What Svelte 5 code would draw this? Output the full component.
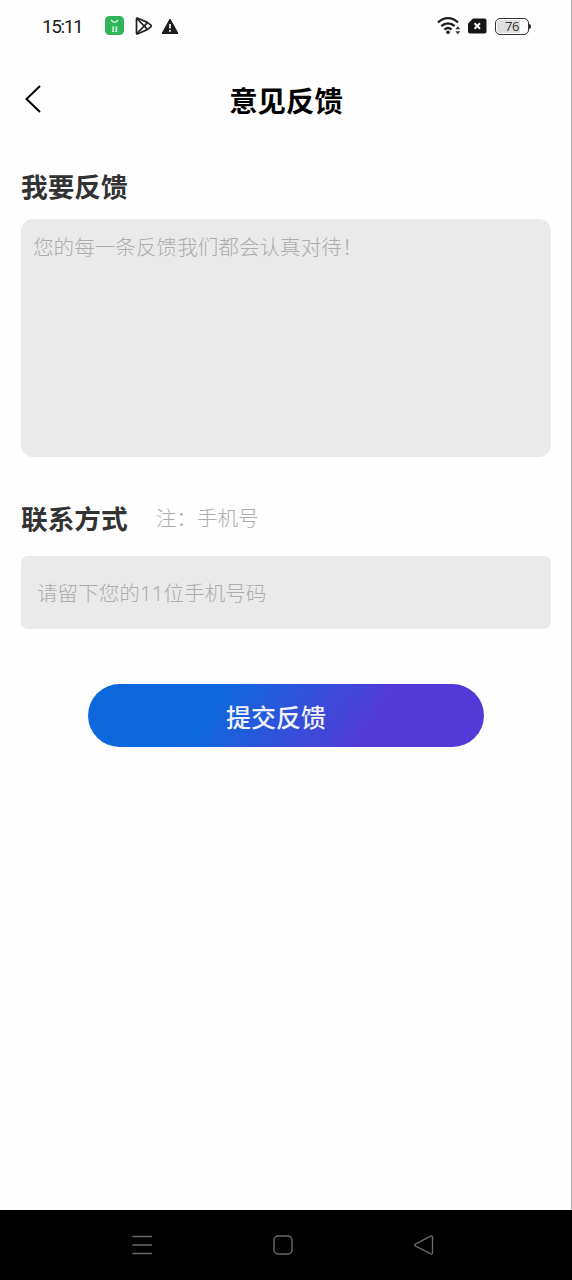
<script>
	let content = $state('');
	let phone = $state('');

	function submit(event) {
		event.preventDefault();
		content = '';
		phone = '';
	}
</script>

<div class="screen">
	<div class="status">
		<span class="time">15:11</span>
		<svg class="app" width="20" height="20" viewBox="0 0 20 20">
			<rect x="0" y="0" width="19" height="19" rx="4.5" fill="#2fb457" />
			<path d="M6.2 3.7c.8 3.4 6 3.4 6.8 0" fill="none" stroke="#e9ffef" stroke-width="1.1" />
			<path
				d="M7 11h2.200M10.200 11h2.300M8.200 11v5M11.300 11v5M7 13.300h2.200M10.200 13.300h2.300M7 15.500h2.200M10.200 15.500h2.300"
				fill="none"
				stroke="#d5f7de"
				stroke-width="1.1"
			/>
		</svg>
		<svg class="play" width="18" height="18" viewBox="0 0 18 18">
			<path d="M2.8 1.2Q1.500.5 1.500 2v14q0 1.500 1.300.8L12.200 12.600 15.800 9.800q1-.8 0-1.600L12.200 5.400z" />
			<path d="M1.800 1.500 12.300 12.200M1.800 16.500 12.300 5.800" />
		</svg>
		<svg class="warn" width="18" height="17" viewBox="0 0 18 17">
			<path d="M9 1 17 15.500H1z" fill="#1c1c1c" stroke="#1c1c1c" stroke-width="1" stroke-linejoin="round" />
			<path d="M9 6v4.500M9 12v1.800" stroke="#fff" stroke-width="1.700" />
		</svg>

		<svg class="wifi" width="24" height="20" viewBox="0 0 24 20">
			<g fill="none" stroke="#1c1c1c" stroke-width="2.300">
				<path d="M1 6.500C7 .7 15 .7 21 6.500" />
				<path d="M4.300 10.200c4-3.800 9.400-3.800 13.400 0" />
				<path d="M7.500 13.600c2.200-2 4.800-2 7 0" />
			</g>
			<circle cx="11" cy="16.200" r="1.800" fill="#1c1c1c" />
			<path d="m18.300 13.300 2.500-3 2.500 3zM18.300 15.300l2.500 3 2.500-3z" fill="#333" />
		</svg>
		<svg class="sim" width="19" height="17" viewBox="0 0 19 17">
			<path d="M5 .5h11.500a2 2 0 0 1 2 2v11a2 2 0 0 1-2 2H2a2 2 0 0 1-2-2V5.500z" fill="#161616" />
			<path d="m6.500 5.300 5.500 5.500M12 5.300l-5.500 5.500" stroke="#fff" stroke-width="2" />
		</svg>
		<div class="battery"><span>76</span></div>
	</div>

	<header>
		<button class="back" aria-label="返回">
			<svg width="18" height="30" viewBox="0 0 18 30">
				<path d="M16 2 2.500 15 16 28" fill="none" stroke="#000" stroke-width="2" />
			</svg>
		</button>
		<h1>意见反馈</h1>
	</header>

	<form onsubmit={submit}>
		<label for="content">我要反馈</label>
		<textarea id="content" bind:value={content} placeholder="您的每一条反馈我们都会认真对待！"></textarea>

		<div class="row">
			<label for="phone">联系方式</label>
			<span class="note">注：手机号</span>
		</div>
		<input id="phone" type="tel" maxlength="11" bind:value={phone} placeholder="请留下您的11位手机号码" />

		<button class="submit">提交反馈</button>
	</form>

	<nav>
		<svg width="22" height="22" viewBox="0 0 22 22">
			<path d="M1.500 2.500h19.500M1.500 11h19.500M1.500 19.500h19.500" />
		</svg>
		<svg width="22" height="22" viewBox="0 0 22 22">
			<rect x="2" y="2" width="18" height="18" rx="4" />
		</svg>
		<svg width="22" height="22" viewBox="0 0 22 22">
			<path d="M2.700 9.900 17.800 2.200q1.700-.7 1.700 1v15.600q0 1.700-1.700 1L2.700 12.100q-1.700-1.100 0-2.200z" />
		</svg>
	</nav>
</div>

<style>
	:global(body) {
		background: #fff;
	}

	.screen {
		box-sizing: border-box;
		display: flex;
		flex-direction: column;
		height: 1280px;
		font-family: 'Noto Sans CJK SC', sans-serif;
		background: linear-gradient(#b4b4b4, #b4b4b4) right / 1px 100% no-repeat #fefefe;
	}

	.status {
		display: flex;
		align-items: center;
		height: 52px;
		padding: 0 43px 0 42px;
	}

	.time {
		width: 63px;
		font-family: Roboto, sans-serif;
		font-size: 19px;
		letter-spacing: -1.4px;
		color: #1c1c1c;
	}

	.play {
		margin-left: 10px;
		fill: none;
		stroke: #222;
		stroke-width: 1.7;
		stroke-linejoin: round;
	}

	.warn {
		margin-left: 8px;
	}

	.wifi {
		margin-left: auto;
	}

	.sim {
		margin-left: 7px;
	}

	.battery {
		position: relative;
		box-sizing: border-box;
		width: 34px;
		height: 17px;
		margin-left: 8px;
		border: 1.5px solid #333;
		border-radius: 5px;
		background: linear-gradient(90deg, #dedede 76%, #fff 76%);
		background-clip: padding-box;
		box-shadow: inset 0 0 0 1px #fff;
		font: 13px/15px 'Open Sans', sans-serif;
		letter-spacing: -0.5px;
		text-align: center;
		color: #333;
	}

	.battery::after {
		content: '';
		position: absolute;
		top: 5px;
		right: -3px;
		width: 2px;
		height: 5px;
		border-radius: 0 2px 2px 0;
		background: #333;
	}

	header {
		display: grid;
		grid-template-columns: 60px 1fr 60px;
		align-items: center;
		height: 94px;
	}

	button {
		border: none;
		font-family: inherit;
	}

	.back {
		display: flex;
		padding: 0 0 0 24px;
		background: none;
	}

	h1 {
		margin: 0;
		font-size: 28.4px;
		font-weight: 700;
		text-align: center;
		color: #000;
	}

	form {
		flex: 1;
		display: flex;
		flex-direction: column;
		padding: 20px 21px 0;
	}

	label {
		font-size: 26.7px;
		line-height: 40px;
		font-weight: 700;
		color: #333;
	}

	textarea,
	input {
		box-sizing: border-box;
		width: 530px;
		margin: 0;
		border: none;
		outline: none;
		resize: none;
		background: #eaeaea;
		font-family: 'Noto Sans', 'Noto Sans CJK SC', sans-serif;
		font-size: 20.6px;
		color: #333;
	}

	textarea {
		height: 238px;
		margin-top: 13px;
		padding: 13px 12px;
		border-radius: 12px;
		line-height: 30px;
	}

	input {
		height: 73px;
		padding: 1px 16px 0;
		border-radius: 7px;
	}

	::placeholder {
		color: #acacac;
		font-weight: 300;
		opacity: 1;
	}

	.row {
		display: flex;
		align-items: center;
		height: 40px;
		margin: 41px 0 18px;
	}

	.note {
		margin: 0 0 2px 28px;
		font-size: 20.6px;
		font-weight: 300;
		color: #acacac;
	}

	.submit {
		align-self: center;
		width: 396px;
		height: 63px;
		margin-top: 55px;
		padding: 0 20px 0 0;
		border-radius: 32px;
		background: linear-gradient(122deg, #0e68dd 32%, #533ad7 71%);
		font-size: 25px;
		font-weight: 500;
		color: #f0f2ff;
	}

	nav {
		display: flex;
		justify-content: center;
		align-items: center;
		gap: 119px;
		height: 70px;
		padding-right: 6px;
		background: #000;
	}

	nav svg {
		fill: none;
		stroke: #6a6a6a;
		stroke-width: 1.4;
	}
</style>
